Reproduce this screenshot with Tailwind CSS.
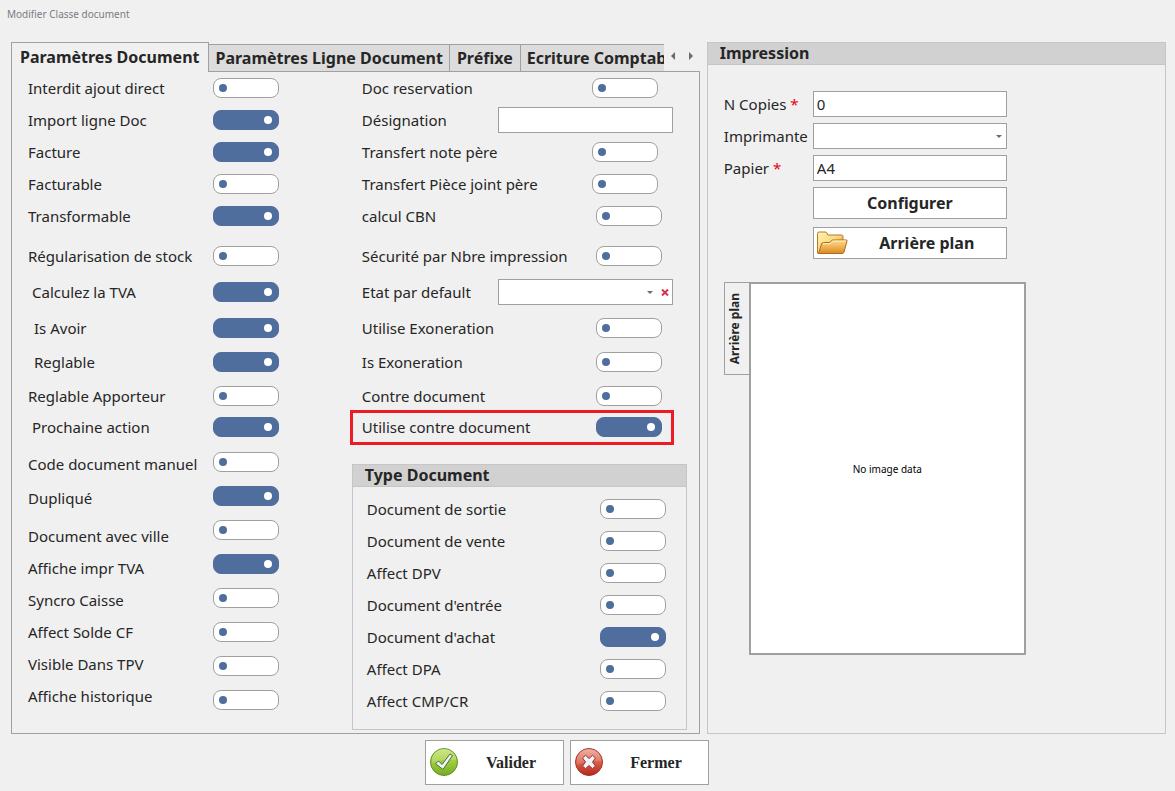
<!DOCTYPE html>
<html lang="fr">
<head>
<meta charset="utf-8">
<title>Modifier Classe document</title>
<script src="https://cdn.jsdelivr.net/npm/@tailwindcss/browser@4"></script>
</head>
<body class="min-h-screen bg-[#f0f0f0] font-['Noto_Sans','Open_Sans',sans-serif] text-[15px] leading-5 text-[#262626]">
<main class="flex flex-col pl-[11px] pr-[9px]">
  <h1 class="-ml-1 h-[42px] pt-1 text-[10px] text-[#7b7b85]">Modifier Classe document</h1>

  <div class="grid grid-cols-[3fr_2fr] gap-[7px]">
    <!-- Left: tabbed settings -->
    <section class="flex min-w-0 flex-col">
      <div class="relative z-10 flex h-[30px] items-end pr-1">
        <div role="tablist" class="flex min-w-0 flex-1 items-end overflow-hidden whitespace-nowrap text-[16px] font-bold">
          <button role="tab" aria-selected="true" class="h-[30px] shrink-0 border border-b-0 border-[#a0a0a0] bg-[#f0f0f0] pb-0.5 pl-2 pr-[9px]">Paramètres Document</button>
          <button role="tab" class="h-7 shrink-0 border border-l-0 border-[#a0a0a0] bg-[#dcdcdc] px-1.5">Paramètres Ligne Document</button>
          <button role="tab" class="h-7 shrink-0 border border-l-0 border-[#a0a0a0] bg-[#dcdcdc] px-[7px]">Préfixe</button>
          <button role="tab" class="h-7 shrink-0 border border-l-0 border-[#a0a0a0] bg-[#dcdcdc] px-1.5">Ecriture Comptable</button>
        </div>
        <div class="flex h-[30px] w-8 shrink-0 items-center justify-between pb-0.5 pl-1.5 pr-0.5">
          <button aria-label="Onglets précédents"><svg width="6" height="8" viewBox="0 0 6 8"><path d="M5 0v8L1 4z" fill="#6b6b6b"/></svg></button>
          <button aria-label="Onglets suivants"><svg width="6" height="8" viewBox="0 0 6 8"><path d="M1 0v8l4-4z" fill="#6b6b6b"/></svg></button>
        </div>
      </div>

      <div class="-mt-px flex flex-1 justify-between border border-[#a0a0a0] pb-[3px] pl-4 pr-3">
        <div class="flex w-[251px] flex-col">
          <div id="general"></div>
          <div class="flex justify-between pt-1">
            <div id="extraLabels" class="flex flex-col pt-[3px]"></div>
            <div id="extraToggles" class="flex flex-col"></div>
          </div>
        </div>
        <div class="flex w-[335px] flex-col">
          <div id="options" class="pl-2.5 pr-[25px]"></div>
          <div role="group" aria-labelledby="typeTitle" class="mt-[22px] h-[266px] border border-[#c6c6c6]">
            <h2 id="typeTitle" class="flex h-[22px] items-center border-b border-[#c6c6c6] bg-[#d1d1d1] pb-0.5 pl-3 text-[16px] font-bold">Type Document</h2>
            <div id="types" class="pl-3.5 pr-5 pt-[7px]"></div>
          </div>
        </div>
      </div>
    </section>

    <!-- Right: print settings -->
    <section class="border border-[#c6c6c6]">
      <h2 class="flex h-[22px] items-center border-b border-[#c6c6c6] bg-[#d1d1d1] pb-0.5 pl-3 text-[16px] font-bold">Impression</h2>
      <div class="pl-4 pt-[26px]">
        <div class="grid w-[283px] grid-cols-[89px_1fr] items-center gap-y-1.5">
          <label for="copies">N Copies <span class="text-red-600">*</span></label>
          <input id="copies" value="0" required class="h-[26px] w-full border border-[#a0a0a0] bg-white px-[3px]">
          <label for="printer">Imprimante</label>
          <div class="relative">
            <select id="printer" class="block h-[26px] w-full appearance-none border border-[#a0a0a0] bg-white px-[3px]"><option></option></select>
            <svg class="pointer-events-none absolute right-[5px] top-3" width="6" height="3" viewBox="0 0 6 3"><path d="M0 0h6L3 3z" fill="#6b6b6b"/></svg>
          </div>
          <label for="paper">Papier <span class="text-red-600">*</span></label>
          <input id="paper" value="A4" required class="h-[26px] w-full border border-[#a0a0a0] bg-white px-[3px]">
          <button class="col-start-2 h-8 border border-[#a0a0a0] bg-white text-[16px] font-bold">Configurer</button>
          <button class="col-start-2 mt-0.5 flex h-8 items-center border border-[#a0a0a0] bg-white pl-[3px] text-[16px] font-bold">
            <svg width="31" height="26" viewBox="0 0 31 26" aria-hidden="true">
              <defs>
                <linearGradient id="fb" x1="0" y1="0" x2="1" y2="1"><stop offset="0" stop-color="#fff3b0"/><stop offset=".5" stop-color="#f8d982"/><stop offset="1" stop-color="#c97a1c"/></linearGradient>
                <linearGradient id="ff" x1="0" y1="0" x2="0" y2="1"><stop offset="0" stop-color="#fbdc93"/><stop offset=".5" stop-color="#efb456"/><stop offset="1" stop-color="#d98a22"/></linearGradient>
              </defs>
              <path d="M.5 23V3.500Q.5 2 2 2H8q1.500 0 2 1l.8 2H24.500q1.500 0 1.500 1.500V20L24 23.500H1.500q-1 0-1-.5z" fill="url(#fb)" stroke="#b9772a"/>
              <path d="M1.500 23.500 4.500 14q.4-1.500 2-1.500h6l3-2.500H29.300q1 0 .7 1L27 22Q26.600 23.500 25 23.500z" fill="url(#ff)" stroke="#b5661a"/>
              <path d="M6 13.700h7l3-2.700h13" fill="none" stroke="#fff0c0"/>
            </svg>
            <span class="flex-1 text-center">Arrière plan</span>
          </button>
        </div>

        <div class="mt-[23px] flex items-start">
          <div class="relative z-10 -mr-px flex h-[93px] w-[26px] items-center justify-center border border-[#a0a0a0] bg-[#f0f0f0] pr-1">
            <span class="rotate-180 text-[12px] font-bold leading-4 [writing-mode:vertical-rl]">Arrière plan</span>
          </div>
          <div class="flex h-[373px] w-[277px] items-center justify-center border-2 border-[#a0a0a0] bg-white text-[10px] text-black">No image data</div>
        </div>
      </div>
    </section>
  </div>

  <footer class="mt-1.5 flex justify-center gap-1.5 pb-1.5 pr-11 font-['Liberation_Serif',serif] text-[16px] font-bold">
    <button class="flex h-[45px] w-[139px] items-center border border-[#a0a0a0] bg-white pl-1">
      <svg width="30" height="30" viewBox="0 0 30 30" aria-hidden="true">
        <defs><linearGradient id="gr" x1="0" y1="0" x2="0" y2="1"><stop offset="0" stop-color="#c3e36a"/><stop offset=".5" stop-color="#9ccb3c"/><stop offset="1" stop-color="#78ac25"/></linearGradient></defs>
        <circle cx="14" cy="14" r="13.500" fill="url(#gr)" stroke="#5f8f24"/>
        <path d="M2 13a12 12 0 0 1 24-1Q14 11 2 15z" fill="#fff" opacity=".18"/>
        <path d="M5.500 15.500 8.500 13l3.500 3.500L20 6l2.500 1.500L13 21.500z" fill="#eef3f8" stroke="#4d6f2a" stroke-linejoin="round"/>
      </svg>
      <span class="flex-1 text-center">Valider</span>
    </button>
    <button class="flex h-[45px] w-[139px] items-center border border-[#a0a0a0] bg-white pl-1">
      <svg width="30" height="30" viewBox="0 0 30 30" aria-hidden="true">
        <defs><linearGradient id="rd" x1="0" y1="0" x2="0" y2="1"><stop offset="0" stop-color="#eda597"/><stop offset=".5" stop-color="#d9604c"/><stop offset="1" stop-color="#b5261c"/></linearGradient></defs>
        <circle cx="14" cy="14" r="13.500" fill="url(#rd)" stroke="#a83226"/>
        <path d="M1.500 14a12.500 12.500 0 0 1 25-1Q14 12 1.500 17z" fill="#fff" opacity=".15"/>
        <path d="M7.500 10 10.500 7.300 14 10.500 17.500 7.300 20.500 10 17.500 14l3 4L17.500 20.700 14 17.500l-3.500 3.200L7.500 18l3-4z" fill="#eef1f8" stroke="#a02c25" stroke-linejoin="round"/>
      </svg>
      <span class="flex-1 text-center">Fermer</span>
    </button>
  </footer>
</main>

<script>
const toggle = (id, on) =>
  `<input type="checkbox" role="switch" id="${id}" ${on ? "checked" : ""} class="flex h-5 w-[66px] shrink-0 appearance-none items-center rounded-lg border border-[#a0a0a0] bg-white px-[5px] before:size-2 before:rounded-full before:bg-[#4f6e9e] before:content-[''] checked:justify-end checked:border-[#4f6e9e] checked:bg-[#4f6e9e] checked:px-1.5 checked:before:bg-white">`;
const textBox = id =>
  `<input id="${id}" class="-mr-[11px] h-[26px] w-[175px] border border-[#a0a0a0] bg-white px-[3px]">`;
const combo = id =>
  `<div class="relative -mr-[11px]"><select id="${id}" class="block h-[26px] w-[175px] appearance-none border border-[#a0a0a0] bg-white px-[3px]"><option></option></select><svg class="pointer-events-none absolute right-5 top-3" width="6" height="3" viewBox="0 0 6 3"><path d="M0 0h6L3 3z" fill="#6b6b6b"/></svg><button aria-label="Effacer" class="absolute right-1 top-2.5"><svg class="block" width="8" height="7" viewBox="0 0 8 7"><path d="M1 .5l6 6M7 .5l-6 6" stroke="#d2354a" stroke-width="2"/></svg></button></div>`;
const row = (id, text, control, space, extra = "") =>
  `<div class="relative flex h-[30px] items-center justify-between ${space}"><label for="${id}" class="whitespace-nowrap ${extra}">${text}</label>${control}</div>`;

// Vertical spacing shared by the two upper columns
const spaces = ["mt-px", "mt-0.5", "mt-0.5", "mt-0.5", "mt-0.5", "mt-2.5", "mt-1.5", "mt-1.5", "mt-1", "mt-1", "mt-px"];

const general = [["Interdit ajout direct", 0], ["Import ligne Doc", 1], ["Facture", 1], ["Facturable", 0], ["Transformable", 1],
  ["Régularisation de stock", 0], ["Calculez la TVA", 1, "pl-1"], ["Is Avoir", 1, "pl-1.5"], ["Reglable", 1, "pl-1.5"],
  ["Reglable Apporteur", 0], ["Prochaine action", 1, "pl-1"]];
document.getElementById("general").innerHTML =
  general.map(([t, on, extra], i) => row("g" + i, t, toggle("g" + i, on), spaces[i], extra)).join("");

const options = [["Doc reservation", "near"], ["Désignation", "text"], ["Transfert note père", "near"], ["Transfert Pièce joint père", "near"],
  ["calcul CBN"], ["Sécurité par Nbre impression"], ["Etat par default", "combo"], ["Utilise Exoneration"], ["Is Exoneration"],
  ["Contre document"], ["Utilise contre document", "marked"]];
document.getElementById("options").innerHTML = options.map(([t, kind], i) => {
  const id = "o" + i;
  let control = toggle(id, kind === "marked");
  if (kind === "text") control = textBox(id);
  if (kind === "combo") control = combo(id);
  if (kind === "near") control = `<div class="pr-1">${control}</div>`;
  if (kind === "marked") control += `<span class="pointer-events-none absolute -bottom-[3px] -left-3 -right-3 -top-0.5 border-[3px] border-[#ed1c24]"></span>`;
  return row(id, t, control, spaces[i]);
}).join("");

const extra = [["Code document manuel", 0, "mt-0"], ["Dupliqué", 1, "mt-1"], ["Document avec ville", 0, "mt-2"], ["Affiche impr TVA", 1, "mt-0.5"],
  ["Syncro Caisse", 0, "mt-0.5"], ["Affect Solde CF", 0, "mt-0.5"], ["Visible Dans TPV", 0, "mt-0.5"], ["Affiche historique", 0, "mt-0.5"]];
document.getElementById("extraLabels").innerHTML =
  extra.map(([t, on, space], i) => `<label for="e${i}" class="flex h-[30px] items-center whitespace-nowrap ${space}">${t}</label>`).join("");
document.getElementById("extraToggles").innerHTML =
  extra.map(([t, on], i) => `<div class="flex h-[34px] items-start pt-1.5">${toggle("e" + i, on)}</div>`).join("");

const types = [["Document de sortie"], ["Document de vente"], ["Affect DPV"], ["Document d'entrée"], ["Document d'achat", 1], ["Affect DPA"], ["Affect CMP/CR"]];
document.getElementById("types").innerHTML =
  types.map(([t, on], i) => row("t" + i, t, toggle("t" + i, on), i ? "mt-0.5" : "mt-0")).join("");
</script>
</body>
</html>
